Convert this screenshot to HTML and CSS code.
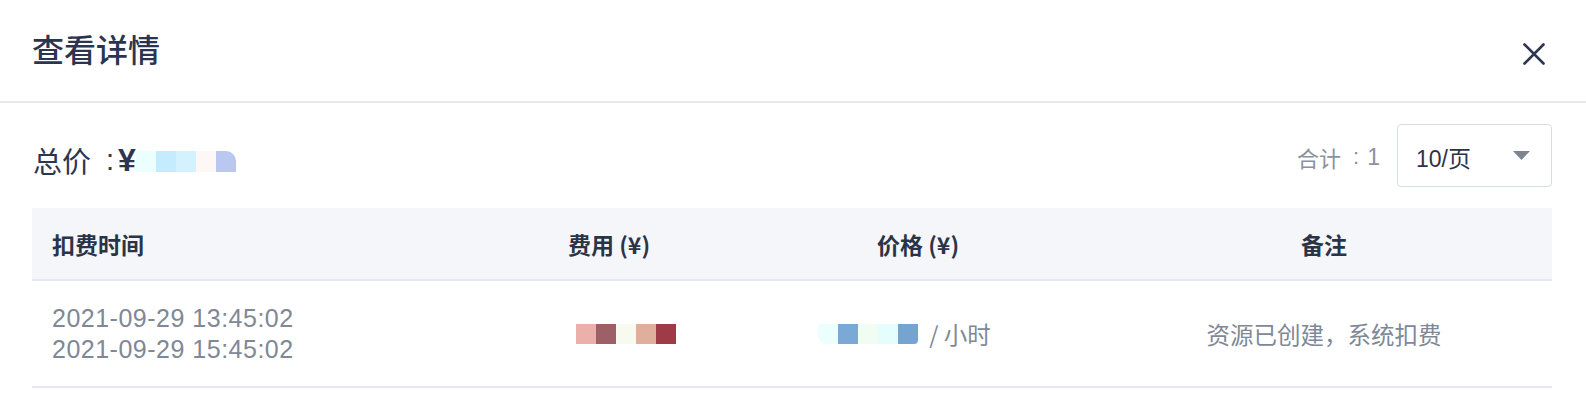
FILE: index.html
```html
<!DOCTYPE html>
<html lang="zh-CN">
<head>
<meta charset="utf-8">
<title>查看详情</title>
<link rel="stylesheet" href="styles.css">
</head>
<body>
<div class="modal">
  <header class="modal-head">
    <h2 class="modal-title">查看详情</h2>
    <button class="close-btn" aria-label="关闭">
      <svg width="22" height="22" viewBox="0 0 22 22"><path d="M1.5 1.5 L20.5 20.5 M20.5 1.5 L1.5 20.5" stroke="#2d3650" stroke-width="2.6" stroke-linecap="round" fill="none"/></svg>
    </button>
  </header>
  <div class="modal-body">
    <div class="toolbar">
      <div class="total"><span class="total-label">总价</span><span class="total-colon">:</span><span class="total-yen">¥</span><span class="redact redact-total"><i class="b t1"></i><i class="b t2"></i><i class="b t3"></i><i class="b t4"></i><i class="b t5"></i></span></div>
      <div class="pager">
        <span class="count"><span class="count-label">合计</span><span class="count-colon">:</span><span class="count-num">1</span></span>
        <div class="select">
          <span class="select-value">10/页</span>
          <svg class="caret" width="17" height="9" viewBox="0 0 17 9"><path d="M0 0 H17 L8.5 9 Z" fill="#7d8592"/></svg>
        </div>
      </div>
    </div>
    <div class="table">
      <div class="thead">
        <div class="th th-left">扣费时间</div>
        <div class="th">费用 (¥)</div>
        <div class="th">价格 (¥)</div>
        <div class="th">备注</div>
      </div>
      <div class="trow">
        <div class="td td-left td-time"><span>2021-09-29 13:45:02</span><span>2021-09-29 15:45:02</span></div>
        <div class="td td-fee"><span class="redact"><i class="b f1"></i><i class="b f2"></i><i class="b f3"></i><i class="b f4"></i><i class="b f5"></i></span></div>
        <div class="td td-price"><span class="redact"><i class="b p1"></i><i class="b p2"></i><i class="b p3"></i><i class="b p4"></i><i class="b p5"></i></span><span class="unit">/ 小时</span></div>
        <div class="td">资源已创建，系统扣费</div>
      </div>
    </div>
  </div>
</div>
</body>
</html>
```
FILE: styles.css
```css
* { box-sizing: border-box; }
html, body { margin: 0; padding: 0; background: #fff; }
body {
  font-family: "Liberation Sans", "Noto Sans CJK SC", sans-serif;
  color: #2b3447;
}
.modal { width: 1586px; }

.modal-head {
  height: 103px;
  display: flex;
  align-items: center;
  justify-content: space-between;
  padding: 0 41px 0 32px;
  border-bottom: 2px solid #e6e9ee;
}
.modal-title {
  margin: 0 0 6px 0;
  font-family: "Noto Sans CJK SC", sans-serif;
  font-weight: 500;
  font-size: 32px;
  line-height: 40px;
  color: #2b3550;
}
.close-btn {
  border: 0;
  background: none;
  padding: 0;
  width: 22px;
  height: 22px;
  margin-top: 7px;
  display: flex;
}

.modal-body { padding: 21px 34px 0 32px; }

.toolbar {
  height: 63px;
  display: flex;
  align-items: center;
  justify-content: space-between;
}
.total {
  font-family: "Noto Sans CJK SC", sans-serif;
  font-size: 29px;
  line-height: 36px;
  color: #2d3650;
  display: flex;
  align-items: center;
  margin-top: 9px;
  padding-left: 1px;
}
.total-colon {
  font-family: "Liberation Sans", sans-serif;
  margin-left: 15px;
}
.total-yen {
  font-family: "Liberation Sans", sans-serif;
  font-weight: 700;
  font-size: 32px;
  margin-left: 4px;
}
.redact { display: inline-flex; }
.b { display: block; width: 20px; height: 20px; }
.redact-total { margin-left: 0; margin-top: 2px; }
.redact-total .b { height: 21px; }
.t1 { background: #ebffff; }
.t2 { background: #c5ecfd; }
.t3 { background: #d4f2fe; }
.t4 { background: #fdf7f5; }
.t5 { background: #bac7f0; border-top-right-radius: 10px; }

.pager { display: flex; align-items: center; }
.count {
  font-family: "Noto Sans CJK SC", sans-serif;
  font-size: 22px;
  color: #8a929e;
  margin-right: 17px;
  margin-top: 3px;
  display: flex;
  align-items: center;
}
.count-colon {
  font-family: "Liberation Sans", sans-serif;
  margin-left: 12px;
}
.count-num {
  font-family: "Liberation Sans", sans-serif;
  font-size: 23px;
  margin-left: 8px;
}
.select {
  width: 155px;
  height: 63px;
  border: 1.5px solid #d8dde4;
  border-radius: 4px;
  display: flex;
  align-items: center;
  justify-content: space-between;
  padding: 0 21px 0 18px;
}
.select-value {
  font-family: "Liberation Sans", "Noto Sans CJK SC", sans-serif;
  font-size: 23px;
  color: #2b3447;
  margin-top: 2px;
}
.caret { display: block; }

.table { margin-top: 21px; }
.thead, .trow {
  display: grid;
  grid-template-columns: 446px 262px 356px 456px;
}
.thead {
  height: 73px;
  background: #f5f6fa;
  border-bottom: 2px solid #e5e9ef;
}
.th {
  display: flex;
  align-items: center;
  justify-content: center;
  font-family: "Noto Sans CJK SC", sans-serif;
  font-weight: 700;
  font-size: 23px;
  color: #2b3447;
}
.th-left { justify-content: flex-start; padding-left: 20px; }

.trow {
  height: 107px;
  border-bottom: 2px solid #e5e9ef;
}
.td {
  display: flex;
  align-items: center;
  justify-content: center;
  font-family: "Noto Sans CJK SC", sans-serif;
  font-size: 23.5px;
  color: #7f8896;
}
.td-left { justify-content: flex-start; padding-left: 20px; }
.td-time {
  flex-direction: column;
  align-items: flex-start;
  justify-content: center;
  font-family: "Liberation Sans", sans-serif;
  font-size: 25px;
  letter-spacing: 0.5px;
  line-height: 31px;
}
.td-fee { padding-left: 34px; }
.f1 { background: #ecb0ab; }
.f2 { background: #9c6066; }
.f3 { background: #f7fbef; }
.f4 { background: #e0ae9c; }
.f5 { background: #9e3b46; }

.td-price { padding-right: 27px; }
.p1 { background: #eafffe; border-bottom-left-radius: 9px; }
.p2 { background: #7aa9d6; }
.p3 { background: #f1fdf2; }
.p4 { background: #e6fdfe; }
.p5 { background: #76a4d1; border-bottom-right-radius: 4px; }
.unit { margin-left: 11px; }
```
